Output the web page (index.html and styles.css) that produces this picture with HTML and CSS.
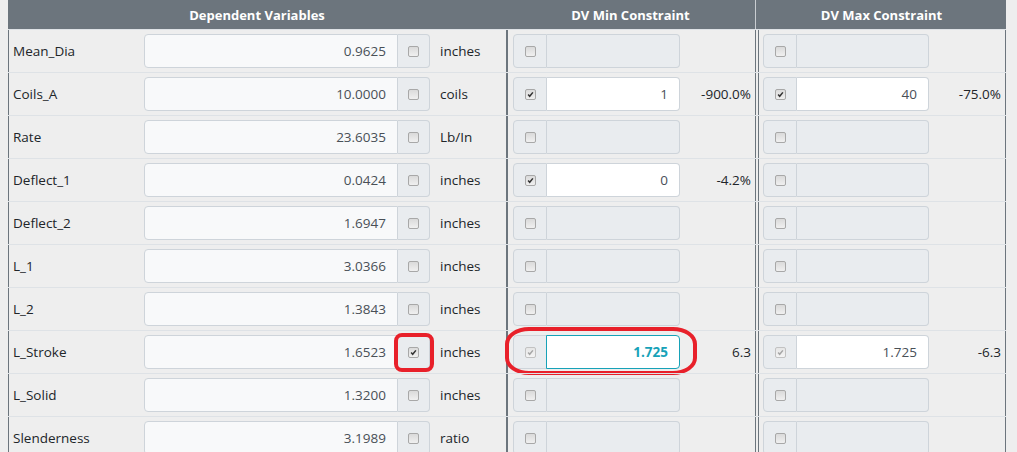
FILE: index.html
```html
<!DOCTYPE html>
<html>
<head>
<meta charset="utf-8">
<link rel="stylesheet" href="styles.css">
</head>
<body>
<div class="table">
  <div class="thead">
    <div class="th c1h">Dependent Variables</div>
    <div class="th c2h">DV Min Constraint</div>
    <div class="th c3h">DV Max Constraint</div>
  </div>

  <div class="row">
    <div class="cell c1"><span class="name">Mean_Dia</span><div class="ig dv"><span class="inp">0.9625</span><span class="addon"><span class="cb"></span></span></div><span class="unit">inches</span></div>
    <div class="cell c2"><div class="ig con"><span class="addon"><span class="cb"></span></span><span class="inp dis"></span></div></div>
    <div class="cell c3"><div class="ig con"><span class="addon"><span class="cb"></span></span><span class="inp dis"></span></div></div>
  </div>

  <div class="row">
    <div class="cell c1"><span class="name">Coils_A</span><div class="ig dv"><span class="inp">10.0000</span><span class="addon"><span class="cb"></span></span></div><span class="unit">coils</span></div>
    <div class="cell c2"><div class="ig con"><span class="addon"><span class="cb on"><svg viewBox="0 0 11 11"><path d="M2.6 5.6 L4.5 7.6 L8.4 2.9"/></svg></span></span><span class="inp en">1</span></div><span class="pct">-900.0%</span></div>
    <div class="cell c3"><div class="ig con"><span class="addon"><span class="cb on"><svg viewBox="0 0 11 11"><path d="M2.6 5.6 L4.5 7.6 L8.4 2.9"/></svg></span></span><span class="inp en">40</span></div><span class="pct">-75.0%</span></div>
  </div>

  <div class="row">
    <div class="cell c1"><span class="name">Rate</span><div class="ig dv"><span class="inp">23.6035</span><span class="addon"><span class="cb"></span></span></div><span class="unit">Lb/In</span></div>
    <div class="cell c2"><div class="ig con"><span class="addon"><span class="cb"></span></span><span class="inp dis"></span></div></div>
    <div class="cell c3"><div class="ig con"><span class="addon"><span class="cb"></span></span><span class="inp dis"></span></div></div>
  </div>

  <div class="row">
    <div class="cell c1"><span class="name">Deflect_1</span><div class="ig dv"><span class="inp">0.0424</span><span class="addon"><span class="cb"></span></span></div><span class="unit">inches</span></div>
    <div class="cell c2"><div class="ig con"><span class="addon"><span class="cb on"><svg viewBox="0 0 11 11"><path d="M2.6 5.6 L4.5 7.6 L8.4 2.9"/></svg></span></span><span class="inp en">0</span></div><span class="pct">-4.2%</span></div>
    <div class="cell c3"><div class="ig con"><span class="addon"><span class="cb"></span></span><span class="inp dis"></span></div></div>
  </div>

  <div class="row">
    <div class="cell c1"><span class="name">Deflect_2</span><div class="ig dv"><span class="inp">1.6947</span><span class="addon"><span class="cb"></span></span></div><span class="unit">inches</span></div>
    <div class="cell c2"><div class="ig con"><span class="addon"><span class="cb"></span></span><span class="inp dis"></span></div></div>
    <div class="cell c3"><div class="ig con"><span class="addon"><span class="cb"></span></span><span class="inp dis"></span></div></div>
  </div>

  <div class="row">
    <div class="cell c1"><span class="name">L_1</span><div class="ig dv"><span class="inp">3.0366</span><span class="addon"><span class="cb"></span></span></div><span class="unit">inches</span></div>
    <div class="cell c2"><div class="ig con"><span class="addon"><span class="cb"></span></span><span class="inp dis"></span></div></div>
    <div class="cell c3"><div class="ig con"><span class="addon"><span class="cb"></span></span><span class="inp dis"></span></div></div>
  </div>

  <div class="row">
    <div class="cell c1"><span class="name">L_2</span><div class="ig dv"><span class="inp">1.3843</span><span class="addon"><span class="cb"></span></span></div><span class="unit">inches</span></div>
    <div class="cell c2"><div class="ig con"><span class="addon"><span class="cb"></span></span><span class="inp dis"></span></div></div>
    <div class="cell c3"><div class="ig con"><span class="addon"><span class="cb"></span></span><span class="inp dis"></span></div></div>
  </div>

  <div class="row">
    <div class="cell c1"><span class="name">L_Stroke</span><div class="ig dv"><span class="inp">1.6523</span><span class="addon"><span class="cb on"><svg viewBox="0 0 11 11"><path d="M2.6 5.6 L4.5 7.6 L8.4 2.9"/></svg></span></span></div><span class="unit">inches</span></div>
    <div class="cell c2"><div class="ig con"><span class="addon"><span class="cb on off"><svg viewBox="0 0 11 11"><path d="M2.6 5.6 L4.5 7.6 L8.4 2.9"/></svg></span></span><span class="inp en focus">1.725</span></div><span class="pct">6.3</span></div>
    <div class="cell c3"><div class="ig con"><span class="addon"><span class="cb on off"><svg viewBox="0 0 11 11"><path d="M2.6 5.6 L4.5 7.6 L8.4 2.9"/></svg></span></span><span class="inp en">1.725</span></div><span class="pct">-6.3</span></div>
    <span class="mark mark-box"></span>
    <span class="mark mark-oval"></span>
  </div>

  <div class="row">
    <div class="cell c1"><span class="name">L_Solid</span><div class="ig dv"><span class="inp">1.3200</span><span class="addon"><span class="cb"></span></span></div><span class="unit">inches</span></div>
    <div class="cell c2"><div class="ig con"><span class="addon"><span class="cb"></span></span><span class="inp dis"></span></div></div>
    <div class="cell c3"><div class="ig con"><span class="addon"><span class="cb"></span></span><span class="inp dis"></span></div></div>
  </div>

  <div class="row">
    <div class="cell c1"><span class="name">Slenderness</span><div class="ig dv"><span class="inp">3.1989</span><span class="addon"><span class="cb"></span></span></div><span class="unit">ratio</span></div>
    <div class="cell c2"><div class="ig con"><span class="addon"><span class="cb"></span></span><span class="inp dis"></span></div></div>
    <div class="cell c3"><div class="ig con"><span class="addon"><span class="cb"></span></span><span class="inp dis"></span></div></div>
  </div>
</div>
</body>
</html>
```
FILE: styles.css
```css
html, body {
  margin: 0;
  padding: 0;
  background: #eeeeee;
}
body {
  padding: 0 8px;
  font-family: "Open Sans", "Noto Sans", sans-serif;
  font-size: 13.5px;
  color: #212529;
  overflow: hidden;
}
.table {
  width: 998px;
}
.thead {
  display: flex;
  height: 29px;
  background: #6c757d;
  color: #ffffff;
  font-weight: 700;
  font-size: 13px;
}
.th {
  display: flex;
  align-items: center;
  justify-content: center;
  box-sizing: border-box;
}
.c1h { width: 498px; }
.c2h { width: 249px; }
.c3h { width: 251px; border-left: 1px solid #c9cdd1; padding-left: 1px; }

.row {
  display: flex;
  position: relative;
  height: 42px;
  border-top: 1px solid #dee2e6;
}
.cell {
  display: flex;
  align-items: center;
  box-sizing: border-box;
  height: 42px;
}
.c1 {
  width: 498px;
  border-left: 1px solid #6c757d;
  padding-left: 4px;
}
.c2 {
  width: 249px;
  border-left: 2px solid #6c757d;
  padding-left: 5px;
  padding-right: 4px;
}
.c3 {
  width: 251px;
  border-left: 4px double #6c757d;
  border-right: 1px solid #6c757d;
  padding-left: 4px;
  padding-right: 4px;
}
.name {
  width: 131px;
  flex: none;
}
.unit {
  margin-left: 10px;
}
.pct {
  margin-left: auto;
}
.ig {
  display: flex;
  height: 34px;
  flex: none;
}
.dv { width: 286px; }
.con { width: 167px; }
.c3 .con { width: 166px; }

.inp {
  flex: 1;
  display: flex;
  align-items: center;
  justify-content: flex-end;
  padding-right: 11px;
  border: 1px solid #ced4da;
  color: #495057;
  background: #f8f9fa;
}
.addon {
  display: flex;
  align-items: center;
  justify-content: center;
  box-sizing: border-box;
  background: #e9ecef;
  border: 1px solid #ced4da;
  flex: none;
}
.dv .inp { border-radius: 4px 0 0 4px; }
.dv .addon {
  width: 32px;
  border-left: 0;
  border-radius: 0 4px 4px 0;
}
.con .addon {
  width: 34px;
  border-radius: 4px 0 0 4px;
}
.con .inp {
  border-left: 0;
  border-radius: 0 4px 4px 0;
}
.inp.dis { background: #e9ecef; }
.inp.en { background: #ffffff; }
.inp.focus {
  margin-left: -1px;
  border: 1px solid #17a2b8;
  color: #17a2b8;
  font-weight: 700;
}

.cb {
  width: 11px;
  height: 11px;
  box-sizing: border-box;
  border: 1px solid #a8a8a8;
  border-radius: 2px;
  background: linear-gradient(#dadada, #f0f0f0);
  display: flex;
}
.cb svg {
  width: 9px;
  height: 9px;
}
.cb svg path {
  fill: none;
  stroke: #333333;
  stroke-width: 1.9;
}
.cb.off {
  border-color: #c2c2c2;
  background: linear-gradient(#e6e6e6, #f4f4f4);
}
.cb.off svg path { stroke: #a6a6a6; }

.mark {
  position: absolute;
  box-sizing: border-box;
  border: 4px solid #e8202a;
  pointer-events: none;
}
.mark-box {
  left: 386px;
  top: 2px;
  width: 40px;
  height: 39px;
  border-radius: 8px;
}
.mark-oval {
  left: 497px;
  top: -4px;
  width: 192px;
  height: 48px;
  border-radius: 24px / 17px;
}
```
